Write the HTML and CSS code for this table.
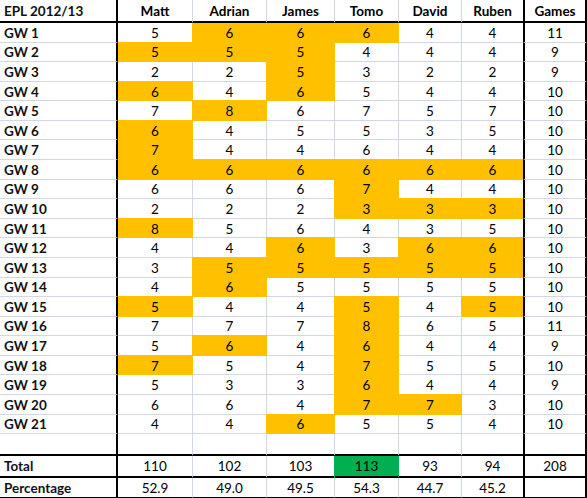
FILE: index.html
```html
<!DOCTYPE html>
<html>
<head>
<meta charset="utf-8">
<link rel="stylesheet" href="styles.css">
</head>
<body>
<div class="sheet">
  <div class="row hd"><div class="c l">EPL 2012/13</div><div class="c">Matt</div><div class="c">Adrian</div><div class="c">James</div><div class="c">Tomo</div><div class="c">David</div><div class="c r">Ruben</div><div class="c g">Games</div></div>
  <div class="row"><div class="c l">GW 1</div><div class="c">5</div><div class="c y yt">6</div><div class="c y yt">6</div><div class="c y yt">6</div><div class="c">4</div><div class="c r">4</div><div class="c g">11</div></div>
  <div class="row"><div class="c l">GW 2</div><div class="c y ym">5</div><div class="c y">5</div><div class="c y">5</div><div class="c">4</div><div class="c">4</div><div class="c r">4</div><div class="c g">9</div></div>
  <div class="row"><div class="c l">GW 3</div><div class="c">2</div><div class="c">2</div><div class="c y">5</div><div class="c">3</div><div class="c">2</div><div class="c r">2</div><div class="c g">9</div></div>
  <div class="row"><div class="c l">GW 4</div><div class="c y ym">6</div><div class="c">4</div><div class="c y">6</div><div class="c">5</div><div class="c">4</div><div class="c r">4</div><div class="c g">10</div></div>
  <div class="row"><div class="c l">GW 5</div><div class="c">7</div><div class="c y">8</div><div class="c">6</div><div class="c">7</div><div class="c">5</div><div class="c r">7</div><div class="c g">10</div></div>
  <div class="row"><div class="c l">GW 6</div><div class="c y ym">6</div><div class="c">4</div><div class="c">5</div><div class="c">5</div><div class="c">3</div><div class="c r">5</div><div class="c g">10</div></div>
  <div class="row"><div class="c l">GW 7</div><div class="c y ym">7</div><div class="c">4</div><div class="c">4</div><div class="c">6</div><div class="c">4</div><div class="c r">4</div><div class="c g">10</div></div>
  <div class="row"><div class="c l">GW 8</div><div class="c y ym">6</div><div class="c y">6</div><div class="c y">6</div><div class="c y">6</div><div class="c y">6</div><div class="c r y">6</div><div class="c g">10</div></div>
  <div class="row"><div class="c l">GW 9</div><div class="c">6</div><div class="c">6</div><div class="c">6</div><div class="c y">7</div><div class="c">4</div><div class="c r">4</div><div class="c g">10</div></div>
  <div class="row"><div class="c l">GW 10</div><div class="c">2</div><div class="c">2</div><div class="c">2</div><div class="c y">3</div><div class="c y">3</div><div class="c r y">3</div><div class="c g">10</div></div>
  <div class="row"><div class="c l">GW 11</div><div class="c y ym">8</div><div class="c">5</div><div class="c">6</div><div class="c">4</div><div class="c">3</div><div class="c r">5</div><div class="c g">10</div></div>
  <div class="row"><div class="c l">GW 12</div><div class="c">4</div><div class="c">4</div><div class="c y">6</div><div class="c">3</div><div class="c y">6</div><div class="c r y">6</div><div class="c g">10</div></div>
  <div class="row"><div class="c l">GW 13</div><div class="c">3</div><div class="c y">5</div><div class="c y">5</div><div class="c y">5</div><div class="c y">5</div><div class="c r y">5</div><div class="c g">10</div></div>
  <div class="row"><div class="c l">GW 14</div><div class="c">4</div><div class="c y">6</div><div class="c">5</div><div class="c">5</div><div class="c">5</div><div class="c r">5</div><div class="c g">10</div></div>
  <div class="row"><div class="c l">GW 15</div><div class="c y ym">5</div><div class="c">4</div><div class="c">4</div><div class="c y">5</div><div class="c">4</div><div class="c r y">5</div><div class="c g">10</div></div>
  <div class="row"><div class="c l">GW 16</div><div class="c">7</div><div class="c">7</div><div class="c">7</div><div class="c y">8</div><div class="c">6</div><div class="c r">5</div><div class="c g">11</div></div>
  <div class="row"><div class="c l">GW 17</div><div class="c">5</div><div class="c y">6</div><div class="c">4</div><div class="c y">6</div><div class="c">4</div><div class="c r">4</div><div class="c g">9</div></div>
  <div class="row"><div class="c l">GW 18</div><div class="c y ym">7</div><div class="c">5</div><div class="c">4</div><div class="c y">7</div><div class="c">5</div><div class="c r">5</div><div class="c g">10</div></div>
  <div class="row"><div class="c l">GW 19</div><div class="c">5</div><div class="c">3</div><div class="c">3</div><div class="c y">6</div><div class="c">4</div><div class="c r">4</div><div class="c g">9</div></div>
  <div class="row"><div class="c l">GW 20</div><div class="c">6</div><div class="c">6</div><div class="c">4</div><div class="c y">7</div><div class="c y">7</div><div class="c r">3</div><div class="c g">10</div></div>
  <div class="row"><div class="c l">GW 21</div><div class="c">4</div><div class="c">4</div><div class="c y">6</div><div class="c">5</div><div class="c">5</div><div class="c r">4</div><div class="c g">10</div></div>
  <div class="row sep"><div class="c l"></div><div class="c"></div><div class="c"></div><div class="c"></div><div class="c"></div><div class="c"></div><div class="c r"></div><div class="c g"></div></div>
  <div class="row tot"><div class="c l">Total</div><div class="c">110</div><div class="c">102</div><div class="c">103</div><div class="c gr">113</div><div class="c">93</div><div class="c r">94</div><div class="c g">208</div></div>
  <div class="row pct"><div class="c l">Percentage</div><div class="c">52.9</div><div class="c">49.0</div><div class="c">49.5</div><div class="c">54.3</div><div class="c">44.7</div><div class="c r">45.2</div><div class="c g"></div></div>
</div>
</body>
</html>
```
FILE: styles.css
```css
html, body {
  margin: 0;
  padding: 0;
  background: #ffffff;
}

.sheet {
  display: grid;
  grid-template-columns: 118px 75px 74px 68px 64px 63px 61px 64px;
  grid-template-rows: 23px repeat(21, 19.59px) 21.6px 22px 20px;
  width: 587px;
  font-family: Lato, "Liberation Sans", sans-serif;
  font-size: 13.5px;
  color: #000;
}

.row {
  display: contents;
}

.c {
  box-sizing: border-box;
  display: flex;
  align-items: center;
  justify-content: center;
  padding-top: 1px;
  border-right: 1px solid #d0d7e5;
  border-bottom: 1px solid #d0d7e5;
  background: #ffffff;
  white-space: nowrap;
}

.c.l {
  justify-content: flex-start;
  padding-left: 4px;
  font-weight: bold;
  color: #111;
  border-right: 2px solid #000;
}

.c.r {
  border-right: none;
}

.c.g {
  border-left: 2px solid #000;
  border-right: 2px solid #000;
}

.hd .c {
  font-weight: bold;
  border-bottom: 2px solid #000;
}

.sep .c,
.tot .c {
  border-bottom: 2px solid #000;
}

.pct .c {
  border-bottom: 1px solid #000;
}

.c.y {
  background: #ffc000;
  border-bottom-color: #ffc000;
  border-right-color: #ffc000;
  box-shadow: -1px -1px 0 #ffc000, 0 -1px 0 #ffc000;
}

.c.y.r {
  border-right: none;
}

.c.y.ym {
  box-shadow: 0 -1px 0 #ffc000;
}

.c.y.yt {
  box-shadow: -1px 0 0 #ffc000;
}

.c.gr {
  background: #00b050;
  border-right-color: #00b050;
  box-shadow: -1px 0 0 #00b050;
}
```
